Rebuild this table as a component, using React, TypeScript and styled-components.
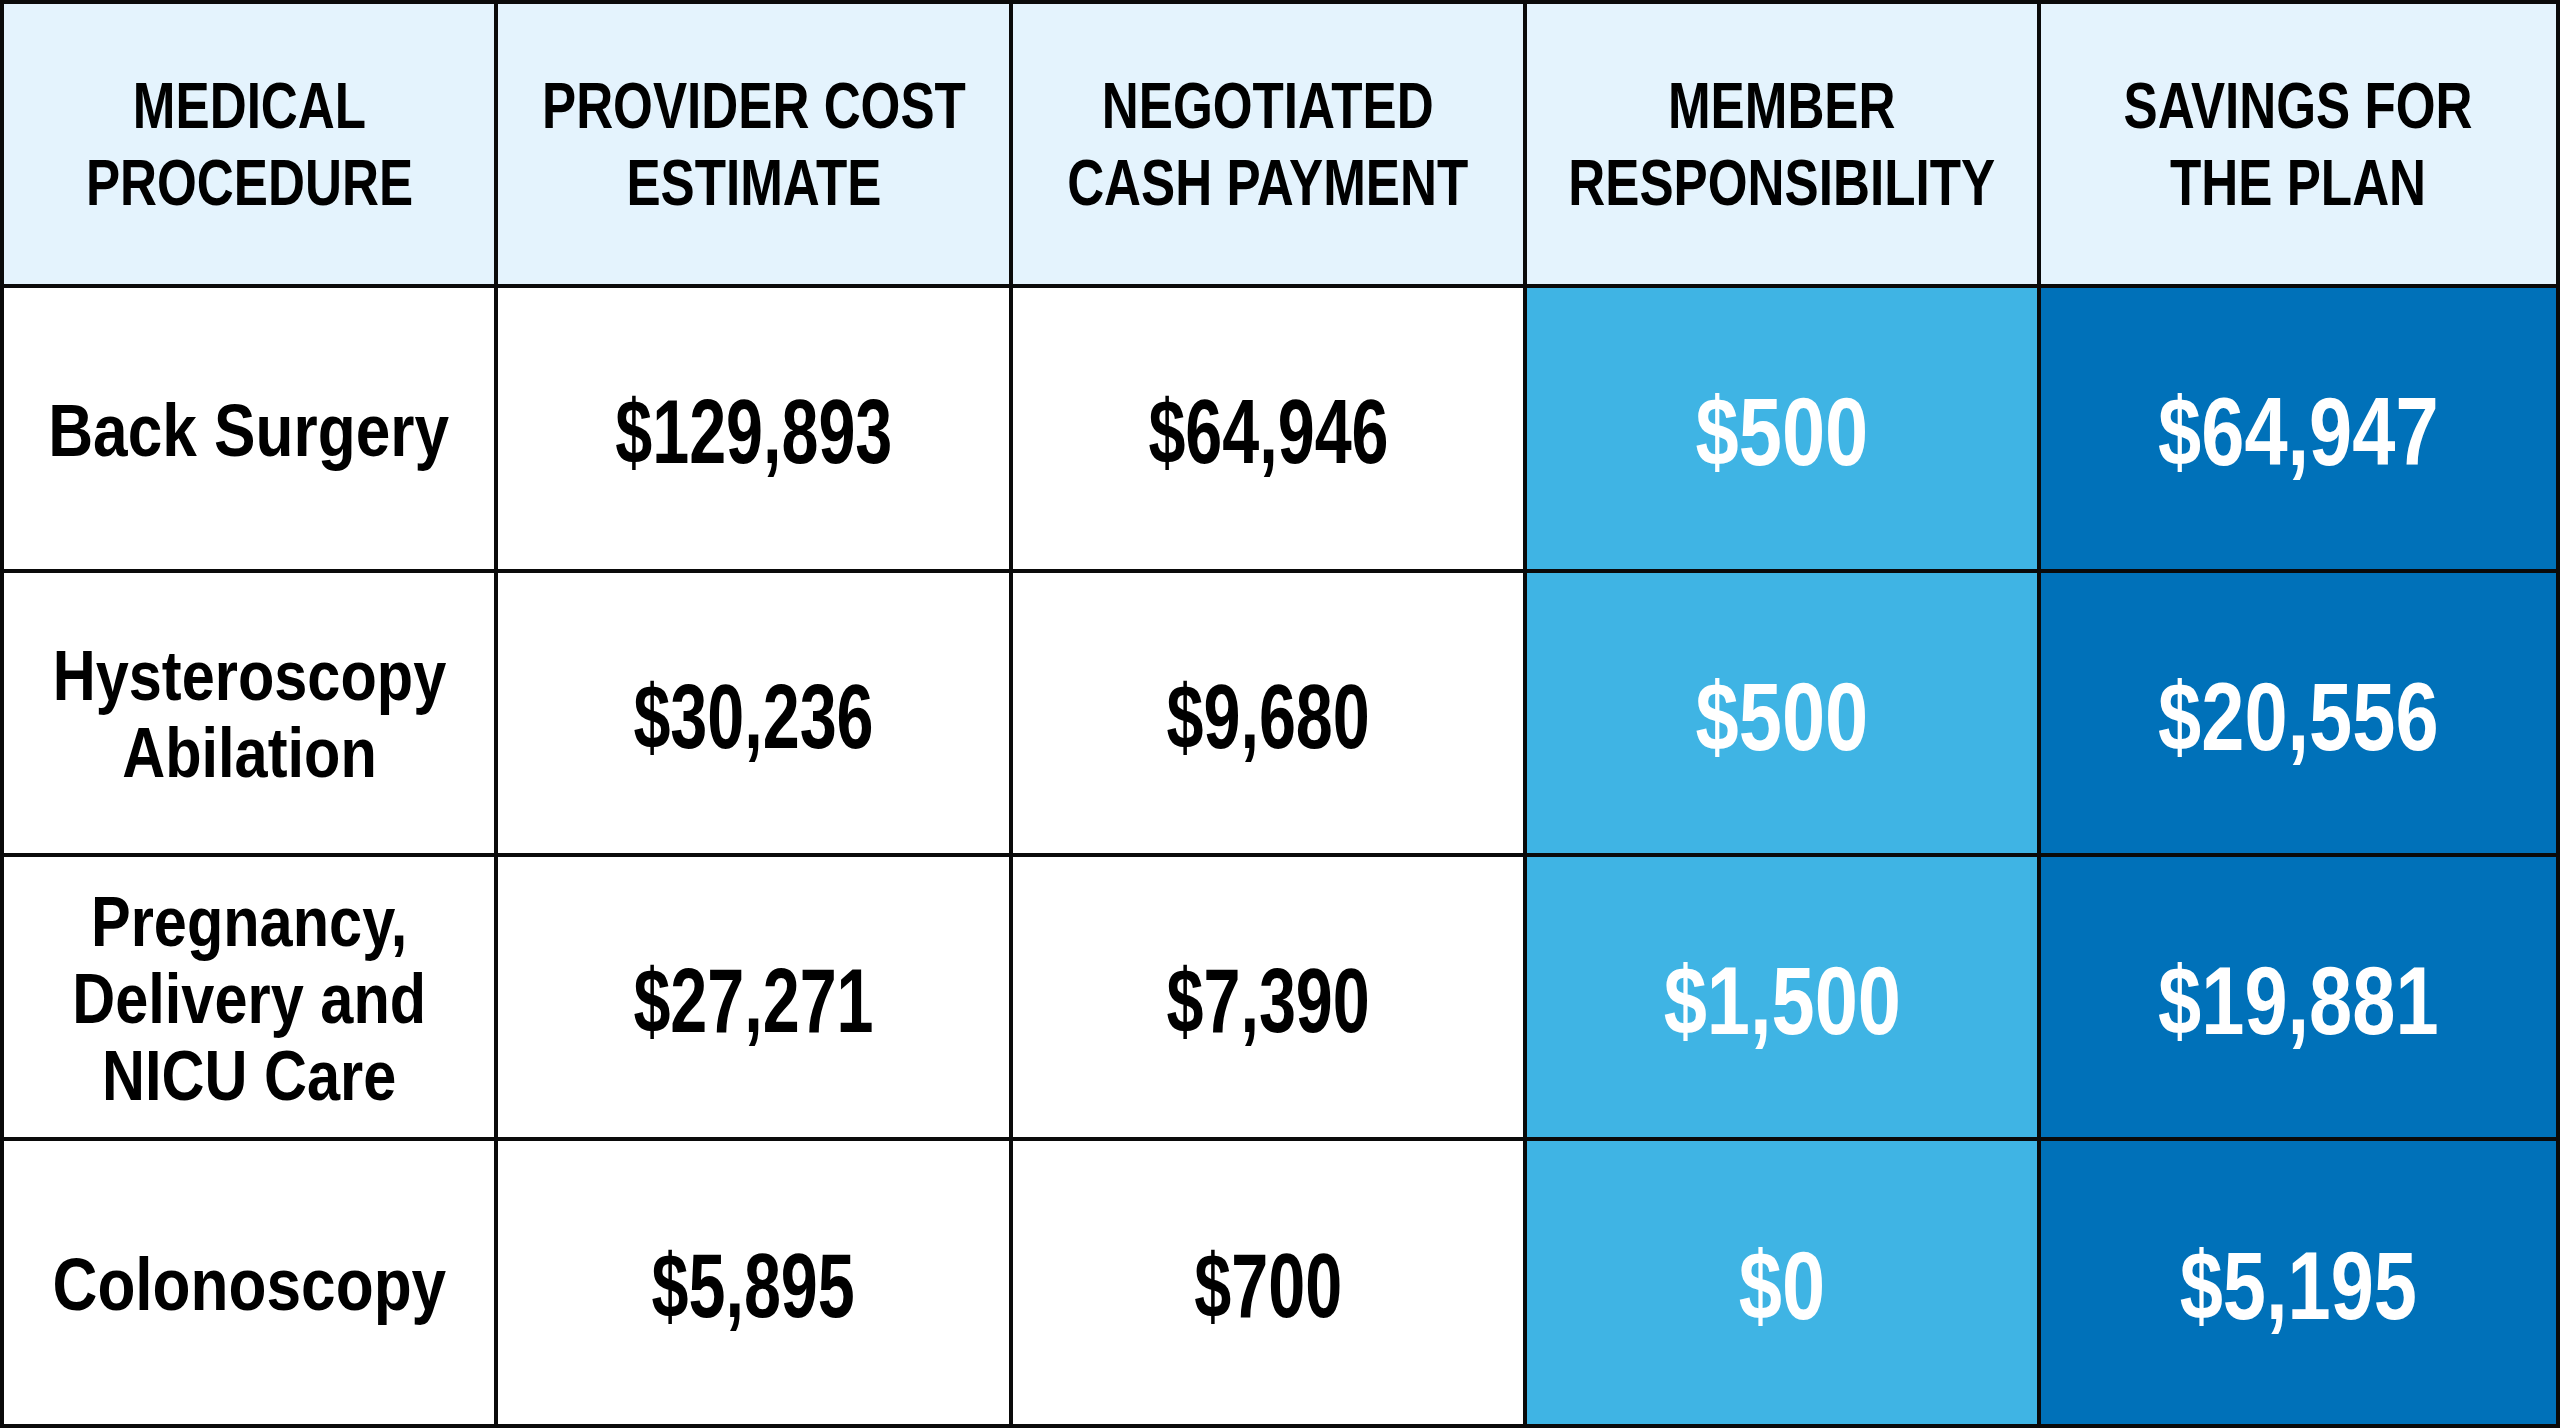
import React from "react";
import styled, { createGlobalStyle, css } from "styled-components";

const GlobalStyle = createGlobalStyle`
  html, body {
    margin: 0;
    padding: 0;
    background: #ffffff;
  }
  body {
    font-family: "Liberation Sans", Arial, sans-serif;
  }
`;

type Variant = "head" | "plain" | "member" | "savings";

const Table = styled.div`
  width: 2560px;
  height: 1428px;
  box-sizing: border-box;
  display: grid;
  grid-template-columns: 490px 511px 510px 510px 515px;
  grid-template-rows: 280px 281px 280px 280px 283px;
  gap: 4px;
  padding: 4px;
  background: #0a0a0a;
  overflow: hidden;
`;

const Cell = styled.div<{ $variant: Variant }>`
  display: flex;
  align-items: center;
  justify-content: center;
  text-align: center;
  overflow: hidden;
  font-family: "Liberation Sans", Arial, sans-serif;
  font-weight: 700;
  ${({ $variant }) => {
    switch ($variant) {
      case "head":
        return css`
          background: #e4f3fd;
          color: #000;
        `;
      case "member":
        return css`
          background: #3fb4e4;
          color: #fff;
        `;
      case "savings":
        return css`
          background: #0071b9;
          color: #fff;
        `;
      default:
        return css`
          background: #ffffff;
          color: #000;
        `;
    }
  }}
`;

/* Condensed bold text: Liberation Sans Bold narrowed to Arial Narrow proportions */
const Narrow = styled.span`
  display: inline-block;
  flex-shrink: 0;
  white-space: nowrap;
  transform-origin: center center;
`;

const HeadText = styled(Narrow)`
  font-size: 64px;
  line-height: 77px;
  transform: scaleX(0.8);
  padding-top: 2px;
`;

const ProcText = styled(Narrow)<{ $small?: boolean }>`
  font-size: ${({ $small }) => ($small ? "70px" : "74px")};
  line-height: 77px;
  transform: ${({ $small }) => ($small ? "scaleX(0.85)" : "scaleX(0.84)")};
  padding-top: 4px;
`;

const Amount = styled(Narrow)<{ $light?: boolean }>`
  font-size: ${({ $light }) => ($light ? "97px" : "91px")};
  line-height: 1;
  transform: ${({ $light }) => ($light ? "scaleX(0.8)" : "scaleX(0.73)")};
  padding-top: 6px;
`;

const headers = [
  ["MEDICAL", "PROCEDURE"],
  ["PROVIDER COST", "ESTIMATE"],
  ["NEGOTIATED", "CASH PAYMENT"],
  ["MEMBER", "RESPONSIBILITY"],
  ["SAVINGS FOR", "THE PLAN"],
];

const rows: { name: string[]; small?: boolean; values: string[] }[] = [
  { name: ["Back Surgery"], values: ["$129,893", "$64,946", "$500", "$64,947"] },
  { name: ["Hysteroscopy", "Abilation"], small: true, values: ["$30,236", "$9,680", "$500", "$20,556"] },
  { name: ["Pregnancy,", "Delivery and", "NICU Care"], small: true, values: ["$27,271", "$7,390", "$1,500", "$19,881"] },
  { name: ["Colonoscopy"], values: ["$5,895", "$700", "$0", "$5,195"] },
];

const lines = (parts: string[]) =>
  parts.map((p, i) => (
    <React.Fragment key={i}>
      {i > 0 && <br />}
      {p}
    </React.Fragment>
  ));

export default function App() {
  return (
    <>
      <GlobalStyle />
      <Table>
        {headers.map((h, i) => (
          <Cell key={`h${i}`} $variant="head">
            <HeadText>{lines(h)}</HeadText>
          </Cell>
        ))}
        {rows.map((r, ri) => (
          <React.Fragment key={ri}>
            <Cell $variant="plain">
              <ProcText $small={r.small}>{lines(r.name)}</ProcText>
            </Cell>
            <Cell $variant="plain">
              <Amount>{r.values[0]}</Amount>
            </Cell>
            <Cell $variant="plain">
              <Amount>{r.values[1]}</Amount>
            </Cell>
            <Cell $variant="member">
              <Amount $light>{r.values[2]}</Amount>
            </Cell>
            <Cell $variant="savings">
              <Amount $light>{r.values[3]}</Amount>
            </Cell>
          </React.Fragment>
        ))}
      </Table>
    </>
  );
}
